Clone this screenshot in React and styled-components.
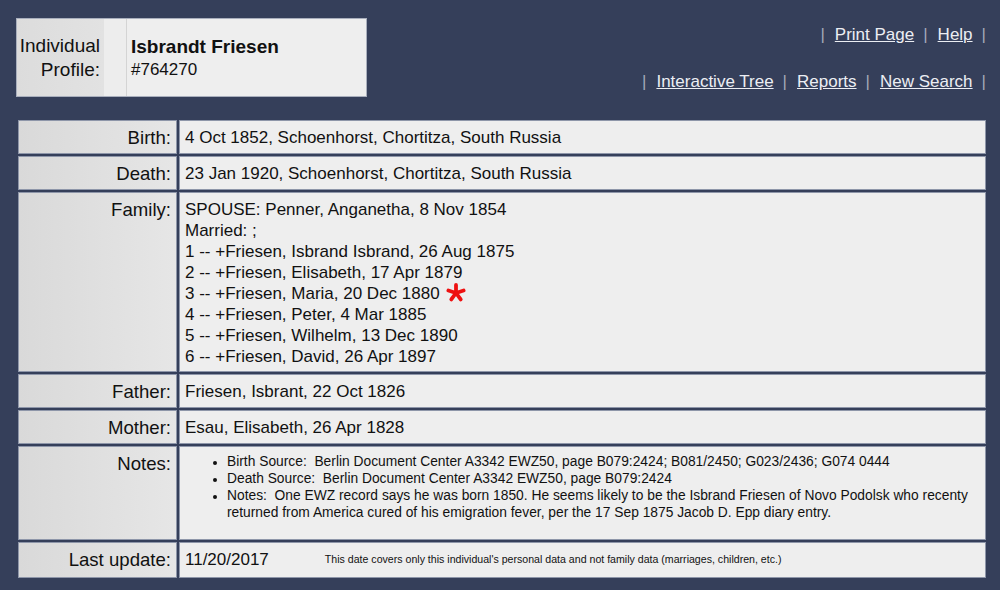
import styled, { createGlobalStyle } from "styled-components";

const GlobalStyle = createGlobalStyle`
  body {
    margin: 0;
    background: #353f5a;
    font-family: "Liberation Sans", Arial, sans-serif;
    color: #111;
  }
`;

const Page = styled.div`
  width: 1000px;
  height: 590px;
  box-sizing: border-box;
  padding: 18px 14px 0 16px;
  overflow: hidden;
`;

const Header = styled.div`
  display: flex;
  justify-content: space-between;
  align-items: flex-start;
`;

const ProfileBox = styled.div`
  display: flex;
  width: 351px;
  height: 79px;
  box-sizing: border-box;
  border: 1px solid #a9afbd;
  background: #eeeeee;
`;

const ProfileLabel = styled.div`
  width: 87px;
  display: flex;
  flex-direction: column;
  justify-content: center;
  align-items: flex-end;
  padding-right: 4px;
  box-sizing: border-box;
  background: linear-gradient(to right, #dcdcdc, #e2e2e2);
  font-size: 19px;
  line-height: 24px;
`;

const Spacer = styled.div`
  width: 22px;
  background: #ededed;
  border-right: 1px solid #d4d4d4;
`;

const ProfileName = styled.div`
  flex: 1;
  display: flex;
  flex-direction: column;
  justify-content: center;
  padding-left: 4px;
  font-size: 17px;
  line-height: 23px;

  & strong {
    font-size: 19px;
  }
`;

const Nav = styled.div`
  display: flex;
  flex-direction: column;
  align-items: flex-end;
  gap: 27px;
  padding-top: 7px;
`;

const NavRow = styled.div`
  display: flex;
  align-items: center;
  font-size: 17px;
  line-height: 20px;
`;

const Pipe = styled.span`
  color: #a3a9b9;
  padding: 0 10px 0 9px;

  &:first-child {
    padding-left: 0;
  }

  &:last-child {
    padding-right: 0;
  }
`;

const NavLink = styled.a`
  color: #eceef3;
  text-decoration: underline;
  cursor: pointer;
`;

const Table = styled.div`
  display: grid;
  grid-template-columns: 159px 807px;
  gap: 2px;
  margin: 23px 0 0 2px;
`;

const Cell = styled.div`
  box-sizing: border-box;
  border: 1px solid #8e96a9;
  height: ${(p) => (p.$h ? `${p.$h}px` : "auto")};
  min-height: 34px;
`;

const Label = styled(Cell)`
  background: linear-gradient(to right, #d9d9d9, #e6e6e6);
  text-align: right;
  font-size: 18.6px;
  line-height: 20px;
  padding: 7px 5px 0 0;
`;

const Value = styled(Cell)`
  background: #eeeeee;
  font-size: 17px;
  line-height: 21px;
  padding: 6px 6px 4px 5px;
`;

const Star = styled.svg`
  width: 20px;
  height: 20px;
  margin-left: 2px;
  vertical-align: -4px;
`;

const NoteList = styled.ul`
  margin: 0;
  padding-left: 42px;
  font-size: 13.8px;
  line-height: 17px;

  & li::marker {
    font-size: 12px;
  }
`;

const SmallNote = styled.span`
  font-size: 10.6px;
  margin-left: 56px;
  vertical-align: 2px;
`;

const children = [
  "1 -- +Friesen, Isbrand Isbrand, 26 Aug 1875",
  "2 -- +Friesen, Elisabeth, 17 Apr 1879",
  "3 -- +Friesen, Maria, 20 Dec 1880",
  "4 -- +Friesen, Peter, 4 Mar 1885",
  "5 -- +Friesen, Wilhelm, 13 Dec 1890",
  "6 -- +Friesen, David, 26 Apr 1897",
];

function Asterisk() {
  const arms = [90, 162, 234, 306, 18];
  return (
    <Star viewBox="0 0 20 20">
      {arms.map((a) => {
        const r = (a * Math.PI) / 180;
        return (
          <line
            key={a}
            x1="10"
            y1="10"
            x2={10 + Math.cos(r) * 8}
            y2={10 - Math.sin(r) * 8}
            stroke="#ee1111"
            strokeWidth="3.8"
            strokeLinecap="round"
          />
        );
      })}
    </Star>
  );
}

export default function App() {
  return (
    <>
      <GlobalStyle />
      <Page>
        <Header>
          <ProfileBox>
            <ProfileLabel>
              <span>Individual</span>
              <span>Profile:</span>
            </ProfileLabel>
            <Spacer />
            <ProfileName>
              <strong>Isbrandt Friesen</strong>
              <span>#764270</span>
            </ProfileName>
          </ProfileBox>
          <Nav>
            <NavRow>
              <Pipe>|</Pipe>
              <NavLink>Print Page</NavLink>
              <Pipe>|</Pipe>
              <NavLink>Help</NavLink>
              <Pipe>|</Pipe>
            </NavRow>
            <NavRow>
              <Pipe>|</Pipe>
              <NavLink>Interactive Tree</NavLink>
              <Pipe>|</Pipe>
              <NavLink>Reports</NavLink>
              <Pipe>|</Pipe>
              <NavLink>New Search</NavLink>
              <Pipe>|</Pipe>
            </NavRow>
          </Nav>
        </Header>

        <Table>
          <Label>Birth:</Label>
          <Value>4 Oct 1852, Schoenhorst, Chortitza, South Russia</Value>

          <Label>Death:</Label>
          <Value>23 Jan 1920, Schoenhorst, Chortitza, South Russia</Value>

          <Label>Family:</Label>
          <Value>
            SPOUSE: Penner, Anganetha, 8 Nov 1854
            <br />
            Married: ;
            {children.map((c, i) => (
              <div key={c}>
                {c}
                {i === 2 && (
                  <>
                    {" "}
                    <Asterisk />
                  </>
                )}
              </div>
            ))}
          </Value>

          <Label>Father:</Label>
          <Value>Friesen, Isbrant, 22 Oct 1826</Value>

          <Label>Mother:</Label>
          <Value>Esau, Elisabeth, 26 Apr 1828</Value>

          <Label $h={94}>Notes:</Label>
          <Value $h={94}>
            <NoteList>
              <li>
                Birth Source:&nbsp; Berlin Document Center A3342 EWZ50, page
                B079:2424; B081/2450; G023/2436; G074 0444
              </li>
              <li>
                Death Source:&nbsp; Berlin Document Center A3342 EWZ50, page
                B079:2424
              </li>
              <li>
                Notes:&nbsp; One EWZ record says he was born 1850. He seems
                likely to be the Isbrand Friesen of Novo Podolsk who recenty
                returned from America cured of his emigration fever, per the 17
                Sep 1875 Jacob D. Epp diary entry.
              </li>
            </NoteList>
          </Value>

          <Label $h={36}>Last update:</Label>
          <Value $h={36}>
            11/20/2017
            <SmallNote>
              This date covers only this individual's personal data and not
              family data (marriages, children, etc.)
            </SmallNote>
          </Value>
        </Table>
      </Page>
    </>
  );
}
